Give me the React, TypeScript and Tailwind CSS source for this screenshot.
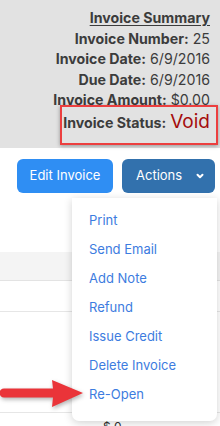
import React from "react";

const items = ["Print", "Send Email", "Add Note", "Refund", "Issue Credit", "Delete Invoice", "Re-Open"];

export default function App() {
  return (
    <div
      className="relative w-[220px] h-[426px] overflow-hidden bg-white"
      style={{ fontFamily: "Inter, 'Noto Sans', sans-serif" }}
    >
      <div className="relative h-[148px] bg-[#e2e2e2] flex flex-col items-end pr-[10px] pt-[8px] text-[14.2px] leading-[20.6px] text-[#3c3c3c]">
        <div className="font-bold underline underline-offset-2">Invoice Summary</div>
        <div><span className="font-bold">Invoice Number:</span> 25</div>
        <div><span className="font-bold">Invoice Date:</span> 6/9/2016</div>
        <div><span className="font-bold">Due Date:</span> 6/9/2016</div>
        <div><span className="font-bold">Invoice Amount:</span> $0.00</div>
        <div className="mt-[1px]">
          <span className="font-bold">Invoice Status:</span>{" "}
          <span className="text-[19px] text-[#a50d0d]">Void</span>
        </div>
        <div className="absolute left-[60px] top-[105px] w-[158px] h-[40px] border-2 border-[#ec3f3f] shadow-[0_1px_4px_rgba(0,0,0,0.35)]" />
      </div>

      <div className="flex justify-end gap-[9px] pr-[5px] pt-[11px]">
        <button className="w-[96px] h-[34px] rounded-[6px] bg-[#2f8ef3] text-white text-[13px]">Edit Invoice</button>
        <button className="w-[93px] h-[34px] rounded-[6px] bg-[#3271ad] text-white text-[13px] flex items-center pl-[14px] gap-[13px]">
          <span>Actions</span>
          <svg width="10" height="10" viewBox="0 0 10 10" fill="none" stroke="white" strokeWidth="2" strokeLinecap="round" strokeLinejoin="round">
            <path d="M2.5 3.8 L5 6.3 L7.5 3.8" />
          </svg>
        </button>
      </div>

      <div className="mt-[59px] h-[29px] bg-[#f4f4f4] border-b border-[#e3e3e3]" />
      <div className="h-[31px] border-b border-[#e6e6e6]" />
      <div className="h-[101px] border-b border-[#e6e6e6]" />
      <div className="pl-[103px] pt-[7px] text-[12px] leading-[14px] text-[#333]">$ 0</div>

      <div className="absolute left-[72px] top-[198px] w-[145px] h-[223px] bg-white rounded-b-[7px] shadow-[0_2px_8px_rgba(0,0,0,0.18)] pt-[8px]">
        {items.map((it) => (
          <div key={it} className="h-[29px] flex items-center pl-[17px] text-[13px] text-[#3d7ce0]">
            {it}
          </div>
        ))}
      </div>

      <svg className="absolute left-0 top-[376px]" width="90" height="36" viewBox="0 0 90 36" style={{ filter: "drop-shadow(1px 2px 2px rgba(0,0,0,0.3))" }}>
        <path d="M4 12.5 L53 12.5 L52 4 L83 17 L52 31 L53 21.5 L4 21.5 A4.5 4.5 0 0 1 4 12.5 Z" fill="#ea3439" />
      </svg>
    </div>
  );
}
